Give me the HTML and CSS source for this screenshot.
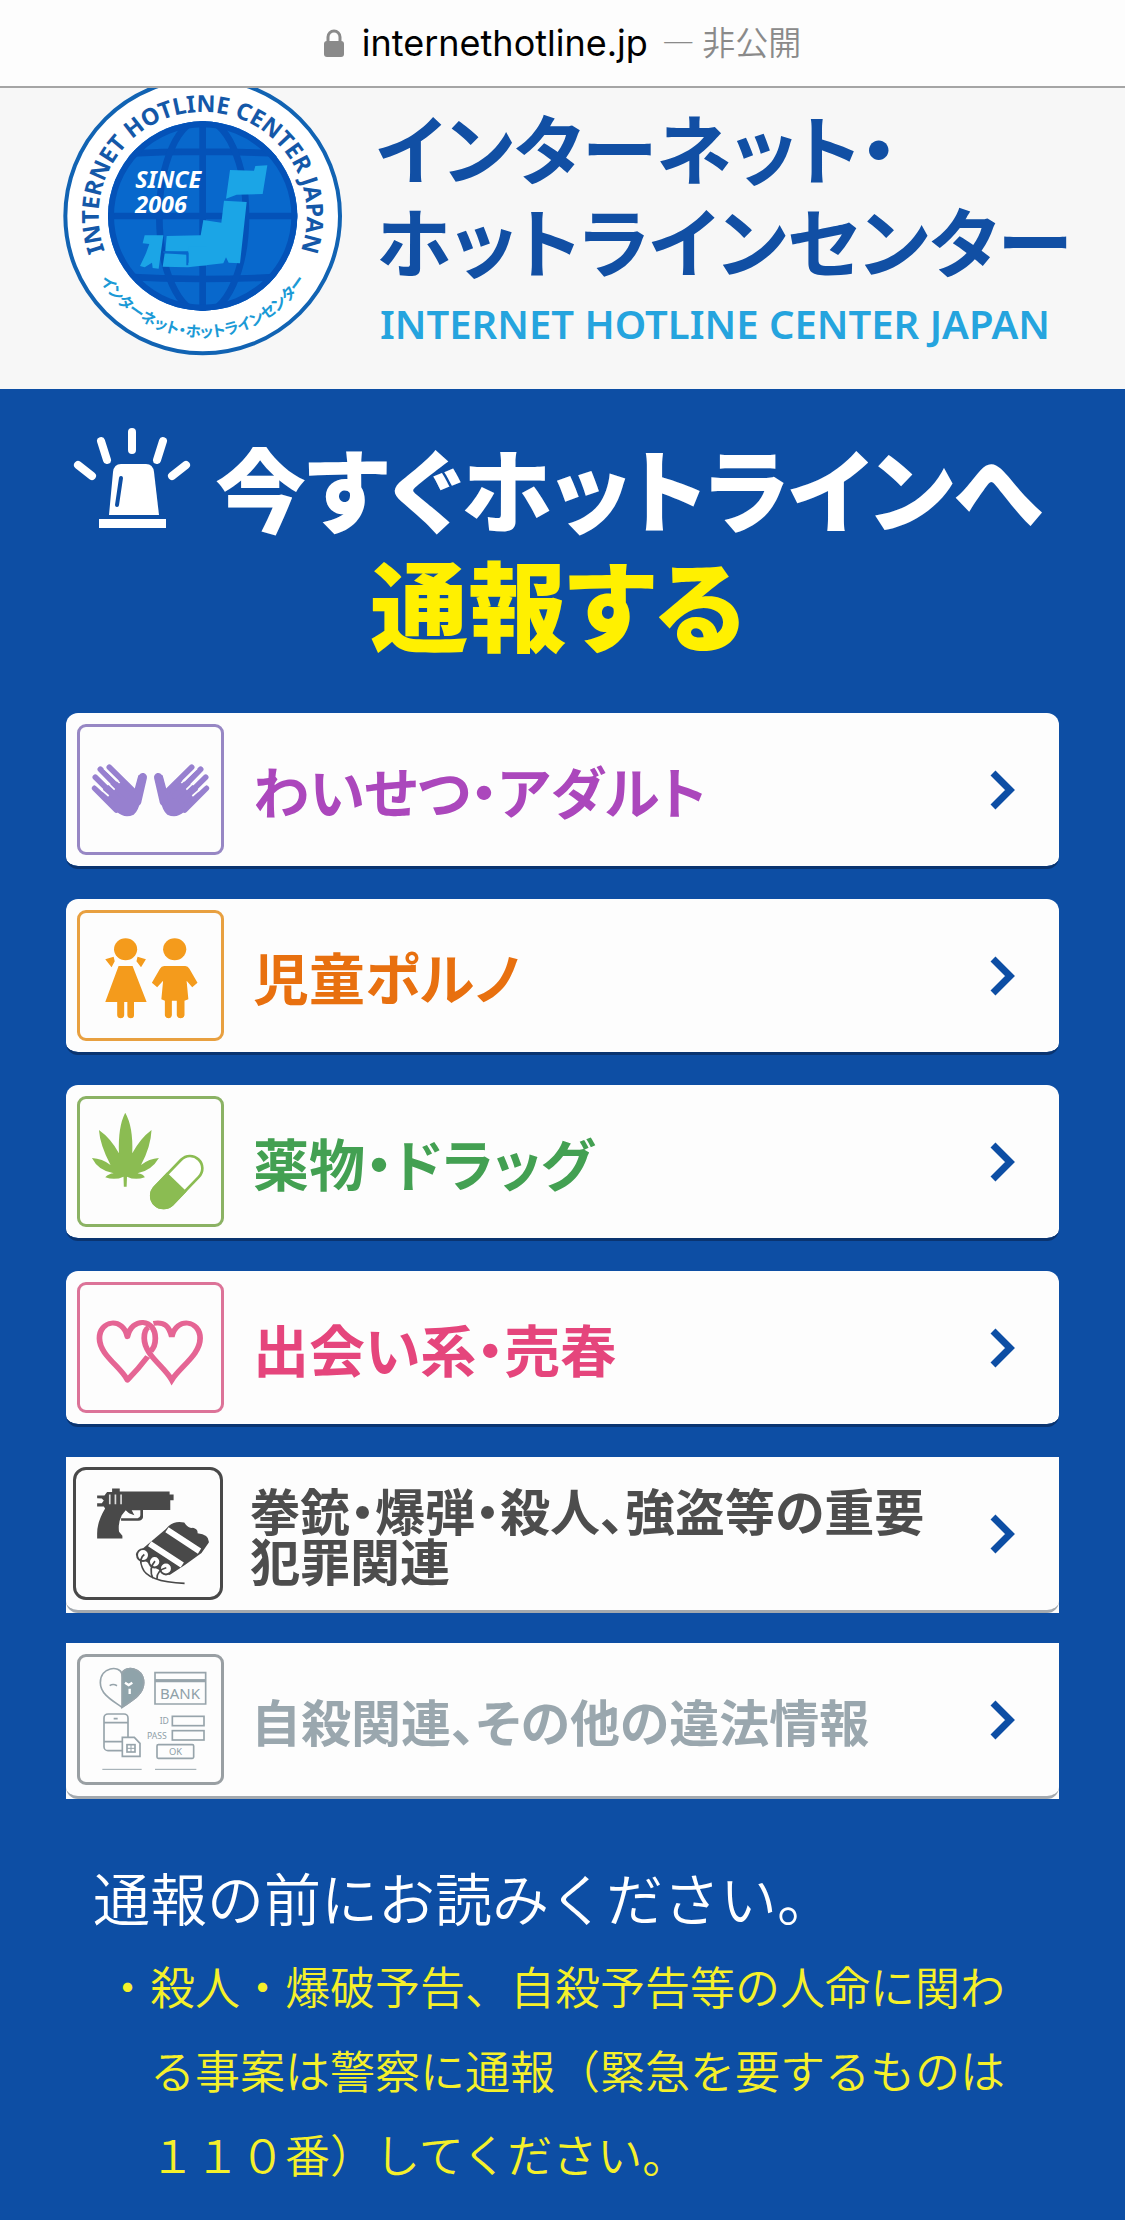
FILE: index.html
```html
<!DOCTYPE html>
<html lang="ja">
<head>
<meta charset="utf-8">
<meta name="viewport" content="width=device-width, initial-scale=1">
<title>インターネット・ホットラインセンター</title>
<link rel="stylesheet" href="styles.css">
</head>
<body>
<div class="address-bar">
  <svg class="lock" viewBox="0 0 20 28" aria-hidden="true"><path d="M4 13V8a6 6 0 0 1 12 0v5" fill="none" stroke="#8a8a8a" stroke-width="3"/><rect x="0" y="12" width="20" height="16" rx="3" fill="#8a8a8a"/></svg>
  <span class="domain">internethotline.jp</span>
  <span class="private">— 非公開</span>
</div>

<header class="site-header">
  <svg class="seal" viewBox="36 24 846 810" role="img" aria-label="INTERNET HOTLINE CENTER JAPAN">
    <defs>
      <path id="arc-top" d="M188 564A312 312 0 1 1 728 564"/>
      <path id="arc-bottom" d="M112 519A363 363 0 0 0 804 519"/>
      <clipPath id="globe"><circle cx="458" cy="408" r="284"/></clipPath>
    </defs>
    <circle cx="458" cy="408" r="412" fill="#fff" stroke="#1163b3" stroke-width="12"/>
    <circle cx="458" cy="408" r="284" fill="#0868cc"/>
    <g clip-path="url(#globe)" fill="none" stroke="#0452b8" stroke-width="20">
      <path d="M458 120V700M170 408H750M215 222Q458 208 700 222M215 590Q458 604 700 590"/>
      <ellipse cx="458" cy="408" rx="130" ry="290"/>
      <circle cx="458" cy="408" r="276"/>
    </g>
    <path fill="#1ba5e6" d="M540 270L612 272 616 258 652 256 638 342 560 344 528 356ZM522 362L590 366 570 550 536 548 528 532 520 550 414 562 338 560 344 520 410 524 414 548 450 546 452 520 346 514 350 468 452 466 460 420 514 428ZM284 466H340L326 566 308 564 306 548 284 562 270 558 288 520 298 492 278 490Z"/>
    <path fill="none" stroke="#0868cc" stroke-width="6" d="M340 517H412V556"/>
    <path fill="#1ba5e6" d="M416 500H470V556H416Z"/>
    <g class="seal-since"><text x="256" y="324">SINCE</text><text x="256" y="400">2006</text></g>
    <text class="seal-en" text-anchor="middle"><textPath href="#arc-top" startOffset="50%">INTERNET HOTLINE CENTER JAPAN</textPath></text>
    <text class="seal-ja" text-anchor="middle"><textPath href="#arc-bottom" startOffset="50%">インターネット・ホットラインセンター</textPath></text>
  </svg>
  <div class="brand">
    <h1 class="brand-ja">インターネット・<br>ホットラインセンター</h1>
    <p class="brand-en">INTERNET HOTLINE CENTER JAPAN</p>
  </div>
</header>

<main class="report">
  <h2 class="lead">
    <span class="lead-line">
      <svg class="siren" viewBox="0 0 118 104" aria-hidden="true">
        <path d="M59 5V23M28 14L34 33M90 14L84 33M5 38L19 49M113 38L99 49" stroke="#fff" stroke-width="8" stroke-linecap="round"/>
        <path d="M36 88L40 45Q41 37 48 37H73Q80 37 81 45L86 88Z" fill="#fff"/>
        <path d="M48 51L44 78" stroke="#0d4ea4" stroke-width="4" stroke-linecap="round"/>
        <rect x="26" y="92" width="67" height="9" fill="#fff"/>
      </svg>
      <span class="lead-text">今すぐホットラインへ</span>
    </span>
    <span class="lead-action">通報する</span>
  </h2>

  <ul class="menu">
    <li class="item"><a class="card purple" href="#">
      <svg class="icon" viewBox="61 81 423 375" aria-hidden="true">
        <g id="hand" fill="#9780cf" stroke="#9780cf" stroke-linecap="round">
          <path stroke="none" d="M126 288L172 336Q194 356 222 344 236 334 243 300L258 230 236 226 224 270 190 236 132 262Z"/>
          <path fill="none" stroke-width="17" d="M149 202L222 274M122 208L200 288M107 232L180 304M105 265L170 330"/>
          <path fill="none" stroke-width="26" d="M249 232L232 305"/>
        </g>
        <use href="#hand" transform="matrix(-1 0 0 1 545 0)"/>
        <path stroke="#fdfdfd" stroke-width="5" d="M133 205L180 249M111 217L165 269M101 248L147 288M412 205L365 249M434 217L380 269M444 248L398 288"/>
      </svg>
      <span class="label">わいせつ・アダルト</span>
      <svg class="chevron" viewBox="0 0 26 40" aria-hidden="true"><path d="M4 3L21 20 4 37"/></svg>
    </a></li>
    <li class="item"><a class="card orange" href="#">
      <svg class="icon" viewBox="61 69 423 375" aria-hidden="true">
        <g fill="#f49b1c" transform="scale(1.052 1)">
          <circle cx="188" cy="178" r="33"/><circle cx="328" cy="178" r="33"/>
          <path d="M130 208L154 200 157 214 148 232ZM246 208L222 200 219 214 232 232ZM168 228H208L248 336H212V376Q212 385 203 385 194 385 193 376V336H184V376Q183 385 174 385 165 385 164 376V336H130Z"/>
          <path d="M298 228H358Q366 228 370 236L393 278 378 292 362 272 367 328 356 332V376Q354 385 345 385 336 385 334 376V332H320V376Q318 385 311 385 302 385 300 376V332L290 328 295 272 278 292 263 278 286 236Q290 228 298 228Z"/>
        </g>
      </svg>
      <span class="label">児童ポルノ</span>
      <svg class="chevron" viewBox="0 0 26 40" aria-hidden="true"><path d="M4 3L21 20 4 37"/></svg>
    </a></li>
    <li class="item"><a class="card green" href="#">
      <svg class="icon" viewBox="61 627 423 375" aria-hidden="true">
        <g fill="#8bbc52" transform="scale(1.052 1)">
          <path d="M187 668Q210 710 207 790 230 745 262 720 260 770 232 825 255 806 283 804 262 842 222 850 238 852 243 862 215 872 192 860L191 890H183L182 860Q158 872 130 862 140 851 154 850 110 842 92 804 122 806 145 825 115 765 112 720 146 745 169 790 166 710 187 668Z"/>
          <g transform="translate(334 876) scale(.951 1) rotate(-46)">
            <rect x="-94" y="-37" width="188" height="74" rx="37" fill="#fff" stroke="#8bbc52" stroke-width="8"/>
            <path d="M0-41H-57A41 41 0 0 0-57 41H0Z"/>
          </g>
        </g>
      </svg>
      <span class="label">薬物・ドラッグ</span>
      <svg class="chevron" viewBox="0 0 26 40" aria-hidden="true"><path d="M4 3L21 20 4 37"/></svg>
    </a></li>
    <li class="item"><a class="card pink" href="#">
      <svg class="icon" viewBox="61 75 423 375" aria-hidden="true">
        <g fill="none" stroke="#e56594" stroke-width="15" transform="scale(1.148 1)">
          <path stroke-linejoin="round" d="M230 290Q205 328 177 360C160 320 104 285 104 235 104 180 165 170 177 230 189 170 250 175 250 235 250 256 245 264 238 274"/>
          <path d="M245 190C275 184 286 200 293 230 305 170 367 180 367 235 367 285 315 320 293 360 275 320 221 285 221 235 221 220 225 206 232 202"/>
        </g>
      </svg>
      <span class="label">出会い系・売春</span>
      <svg class="chevron" viewBox="0 0 26 40" aria-hidden="true"><path d="M4 3L21 20 4 37"/></svg>
    </a></li>
    <li class="item square"><a class="card dark" href="#">
      <svg class="icon" viewBox="49 64 432 382" aria-hidden="true">
        <path fill="#494949" d="M157 120H180V129H330V138H342V155H332V184H250V206Q248 216 236 217H184V209H234Q241 208 242 200V185H216L224 200 208 194 198 185 186 200Q174 225 178 250L188 262V270H112V254Q112 220 136 180L132 174H112V164H126L132 156 126 150 112 149V141H134L142 130H157Z"/>
        <path stroke="#ddd" stroke-width="5" d="M150 138V167M167 138V167M184 138V167"/>
        <path fill="#494949" d="M228 318L318 242Q340 214 374 222 386 240 400 238 416 242 414 254 450 258 448 282L426 314 376 350 330 380 290 360Z"/>
        <path stroke="#fff" stroke-width="18" d="M322 244L420 308M270 286L368 350"/>
        <g fill="#fff" stroke="#494949" stroke-width="6"><circle cx="250" cy="320" r="18"/><circle cx="285" cy="340" r="17"/><circle cx="319" cy="360" r="18"/></g>
        <path fill="none" stroke="#494949" stroke-width="5" d="M254 318Q236 330 248 358 262 400 375 405M286 338Q266 360 280 390M320 358Q290 366 292 392"/>
      </svg>
      <span class="label small">拳銃・爆弾・殺人、強盗等の重要<br>犯罪関連</span>
      <svg class="chevron" viewBox="0 0 26 40" aria-hidden="true"><path d="M4 3L21 20 4 37"/></svg>
    </a></li>
    <li class="item square"><a class="card gray" href="#">
      <svg class="icon" viewBox="61 81 423 375" aria-hidden="true">
        <g fill="none" stroke="#97a4ab" stroke-width="5">
          <path d="M187 232C165 215 122 195 122 158 122 110 180 105 187 132 194 105 252 110 252 158 252 195 210 215 187 232Z"/>
          <path fill="#8fa3aa" d="M187 232V132C194 105 252 110 252 158 252 195 210 215 187 232Z"/>
          <path d="M150 167Q160 160 172 167"/>
          <path stroke="#fff" d="M196 158L207 165 218 158M210 176V192" stroke-width="7"/>
          <path d="M286 128H438V222H286ZM286 150H438"/><path d="M286 152H438" stroke-width="9"/>
          <rect x="133" y="252" width="72" height="110" rx="12"/><path d="M133 278H205M133 335H205M162 266H174"/>
          <path fill="#fff" d="M188 322H224L241 340V379H188Z"/><rect x="202" y="344" width="24" height="22"/><path d="M202 355H226M214 344V366" stroke-width="3"/>
          <rect x="338" y="259" width="95" height="28"/><rect x="338" y="302" width="95" height="28"/><rect x="292" y="344" width="110" height="41" rx="4"/>
          <path d="M128 418H246M286 418H410" stroke-width="3"/>
        </g>
        <g class="icon-text"><text x="301" y="206" font-size="45">BANK</text><text x="300" y="283" font-size="26">ID</text><text x="262" y="327" font-size="26">PASS</text><text x="328" y="375" font-size="28">OK</text></g>
      </svg>
      <span class="label small">自殺関連、その他の違法情報</span>
      <svg class="chevron" viewBox="0 0 26 40" aria-hidden="true"><path d="M4 3L21 20 4 37"/></svg>
    </a></li>
  </ul>

  <section class="notice">
    <h3 class="notice-title">通報の前にお読みください。</h3>
    <p class="notice-text">・殺人・爆破予告、自殺予告等の人命に関わる事案は警察に通報（緊急を要するものは１１０番）してください。</p>
  </section>
</main>
</body>
</html>
```

FILE: styles.css
```css
* { box-sizing: border-box; }

body {
  margin: 0;
  background: #0d4ea4;
  font-family: "Noto Sans CJK JP", sans-serif;
}

h1, h2, h3, p, ul { margin: 0; padding: 0; }

.address-bar {
  display: flex;
  align-items: center;
  justify-content: center;
  height: 88px;
  border-bottom: 2px solid #a5a5a5;
  background: #fdfdfd;
  font-size: 33px;
}
.lock { width: 20px; height: 28px; margin-right: 18px; }
.domain { font-family: Inter, sans-serif; font-size: 36px; color: #000; margin-right: 14px; }
.private { color: #8a8a8a; font-weight: 350; line-height: 40px; padding-bottom: 4px; }

.site-header {
  display: flex;
  gap: 32px;
  height: 301px;
  padding: 0 40px 0 62px;
  background: #f7f7f7;
}
.seal { flex: none; width: 282px; height: 270px; }
.seal-since { fill: #fff; font: italic 700 70px "Noto Sans", sans-serif; }
.seal-en { fill: #1458a8; font: 700 70px "Noto Sans", sans-serif; }
.seal-ja { fill: #1b9ad6; font: 700 46px "Noto Sans CJK JP", sans-serif; font-feature-settings: "palt"; }

.brand { padding-top: 12px; white-space: nowrap; }
.brand-ja {
  color: #114fa4;
  font-size: 76px;
  font-weight: 700;
  line-height: 93px;
  font-feature-settings: "palt";
}
.brand-en {
  margin-top: 12px;
  padding-left: 4px;
  color: #25a4de;
  font-family: "Noto Sans", sans-serif;
  font-size: 40px;
  font-weight: 600;
  line-height: 52px;
}

.report { padding: 38px 66px 40px; }

.lead {
  display: flex;
  flex-direction: column;
  align-items: center;
  padding-right: 10px;
  color: #fff;
  font-weight: 900;
  white-space: nowrap;
  font-feature-settings: "palt";
}
.lead-line { display: flex; align-items: flex-start; gap: 24px; }
.siren { width: 118px; height: 104px; }
.lead-text { font-size: 91px; line-height: 118px; }
.lead-action { color: #fff000; font-size: 98px; line-height: 112px; }

.menu {
  display: grid;
  gap: 30px;
  margin-top: 56px;
  list-style: none;
}
.card {
  display: flex;
  align-items: center;
  gap: 29px;
  min-height: 156px;
  padding: 0 44px 0 11px;
  border-bottom: 3px solid #0a3470;
  border-radius: 12px;
  background: #fdfdfd;
  background-clip: padding-box;
  color: var(--tone);
  text-decoration: none;
}
.icon {
  flex: none;
  width: 147px;
  height: 131px;
  border: 3px solid var(--edge);
  border-radius: 9px;
}
.label {
  flex: 1;
  font-size: 56px;
  font-weight: 700;
  line-height: 64px;
  white-space: nowrap;
  font-feature-settings: "palt";
}
.label.small { font-size: 50px; line-height: 50px; }
.chevron { flex: none; width: 26px; height: 40px; }
.chevron path { fill: none; stroke: #0d4ea4; stroke-width: 7; }

.purple { --tone: #ab47bc; --edge: #9787c4; }
.orange { --tone: #e8700f; --edge: #e8a040; }
.green { --tone: #43a052; --edge: #8bb264; }
.pink { --tone: #e5457c; --edge: #dc7398; }
.dark { --tone: #4d4d4d; --edge: #494949; }
.gray { --tone: #9aa7ae; --edge: #999fa3; }

.square { background: #fdfdfd; }
.square .card { border-bottom-color: #a3a9af; gap: 27px; }
.dark.card { padding-left: 7px; }
.dark .icon { width: 150px; height: 133px; border-radius: 13px; }
.icon-text { fill: #8fa0a8; font-family: "Noto Sans", sans-serif; }

.notice { padding: 55px 40px 0 27px; }
.notice-title {
  margin-bottom: 6px;
  color: #fff;
  font-size: 57px;
  font-weight: 350;
  line-height: 84px;
}
.notice-text {
  padding-left: 57px;
  color: #f5f02a;
  font-size: 45px;
  font-weight: 350;
  line-height: 84px;
  text-indent: -45px;
}
```
